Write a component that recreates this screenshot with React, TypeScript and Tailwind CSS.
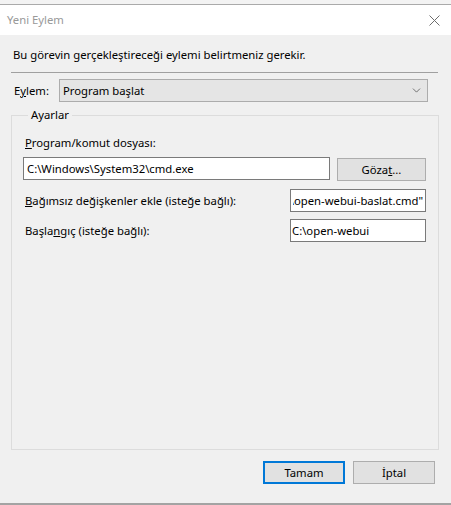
import { ChevronDown } from "lucide-react";

function TextBox({ value, className }: { value: string; className: string }) {
    return (
        <div className={`h-[23px] bg-white border border-[#7a7a7a] flex items-center overflow-hidden whitespace-nowrap ${className}`}>
            {value}
        </div>
    );
}

function Button({ label, primary }: { label: React.ReactNode; primary?: boolean }) {
    return (
        <div
            className={`h-[23px] w-[82px] flex items-center justify-center bg-[#e1e1e1] ${
                primary ? "border-2 border-[#0078d7]" : "border border-[#adadad]"
            }`}
        >
            {label}
        </div>
    );
}

export default function App() {
    return (
        <div
            className="w-[451px] h-[505px] flex flex-col bg-[#f0f0f0] text-[11.3px] leading-[16px] text-black overflow-hidden"
            style={{ fontFamily: '"Noto Sans", "Liberation Sans", sans-serif' }}
        >
            {/* window edge */}
            <div className="h-[5px] shrink-0 bg-[#f3f3f3] border-b border-[#aaaaaa]" />

            {/* title bar */}
            <div className="h-[30px] shrink-0 bg-white flex items-center justify-between pl-[7px] pr-[10px]">
                <span className="text-[#999999]">Yeni Eylem</span>
                <svg width="11" height="11" viewBox="0 0 11 11" className="mr-[1px]">
                    <path d="M0.5 0.5 L10.5 10.5 M10.5 0.5 L0.5 10.5" stroke="#6d6d6d" strokeWidth="1" />
                </svg>
            </div>

            <div className="flex-1 flex flex-col">
                <p className="mt-[12px] ml-[13px]">Bu görevin gerçekleştireceği eylemi belirtmeniz gerekir.</p>

                <div className="mt-[9px] ml-[11px] w-[427px] h-px bg-[#a0a0a0]" />

                {/* Eylem select */}
                <div className="mt-[6px] flex items-center">
                    <span className="ml-[14px] w-[45px]">
                        E<span className="underline">y</span>lem:
                    </span>
                    <div className="w-[369px] h-[23px] bg-[#e5e5e5] border border-[#acacac] flex items-center justify-between pl-[3px] pr-[4px]">
                        <span>Program başlat</span>
                        <ChevronDown size={13} strokeWidth={1.2} className="text-[#333]" />
                    </div>
                </div>

                {/* Ayarlar group */}
                <fieldset className="mt-[5px] ml-[11px] w-[427px] h-[343px] border border-[#dcdcdc] pl-[11px] pr-[12px]">
                    <legend className="ml-[5px] px-[3px]">Ayarlar</legend>

                    <div className="mt-[12px] ml-[2px]">
                        <span className="underline">P</span>rogram/komut dosyası:
                    </div>
                    <div className="mt-[6px] flex items-start">
                        <TextBox value="C:\Windows\System32\cmd.exe" className="w-[307px] pl-[3px]" />
                        <div className="ml-[7px] mt-[1px] w-[89px] h-[23px] bg-[#e1e1e1] border border-[#adadad] flex items-center justify-center">
                            Göza<span className="underline">t</span>...
                        </div>
                    </div>

                    <div className="mt-[8px] flex items-center justify-between">
                        <span className="ml-[2px]">
                            <span className="underline">B</span>ağımsız değişkenler ekle (isteğe bağlı):
                        </span>
                        {/* text scrolled to its end, start clipped */}
                        <div className="w-[136px] h-[23px] bg-white border border-[#7a7a7a] flex items-center justify-end pr-[2px]">
                            <div className="w-[130px] overflow-hidden whitespace-nowrap flex justify-end">
                                {'/c "C:\\open-webui\\open-webui-baslat.cmd"'}
                            </div>
                        </div>
                    </div>

                    <div className="mt-[7px] flex items-center justify-between">
                        <span className="ml-[2px]">
                            Başla<span className="underline">n</span>gıç (isteğe bağlı):
                        </span>
                        <TextBox value="C:\open-webui" className="w-[136px] pl-[1px]" />
                    </div>
                </fieldset>

                <div className="mt-[11px] flex justify-end gap-[8px] pr-[16px]">
                    <Button label="Tamam" primary />
                    <Button label="İptal" />
                </div>
            </div>

            <div className="h-[2px] shrink-0 bg-[#a3a3a3]" />
        </div>
    );
}
